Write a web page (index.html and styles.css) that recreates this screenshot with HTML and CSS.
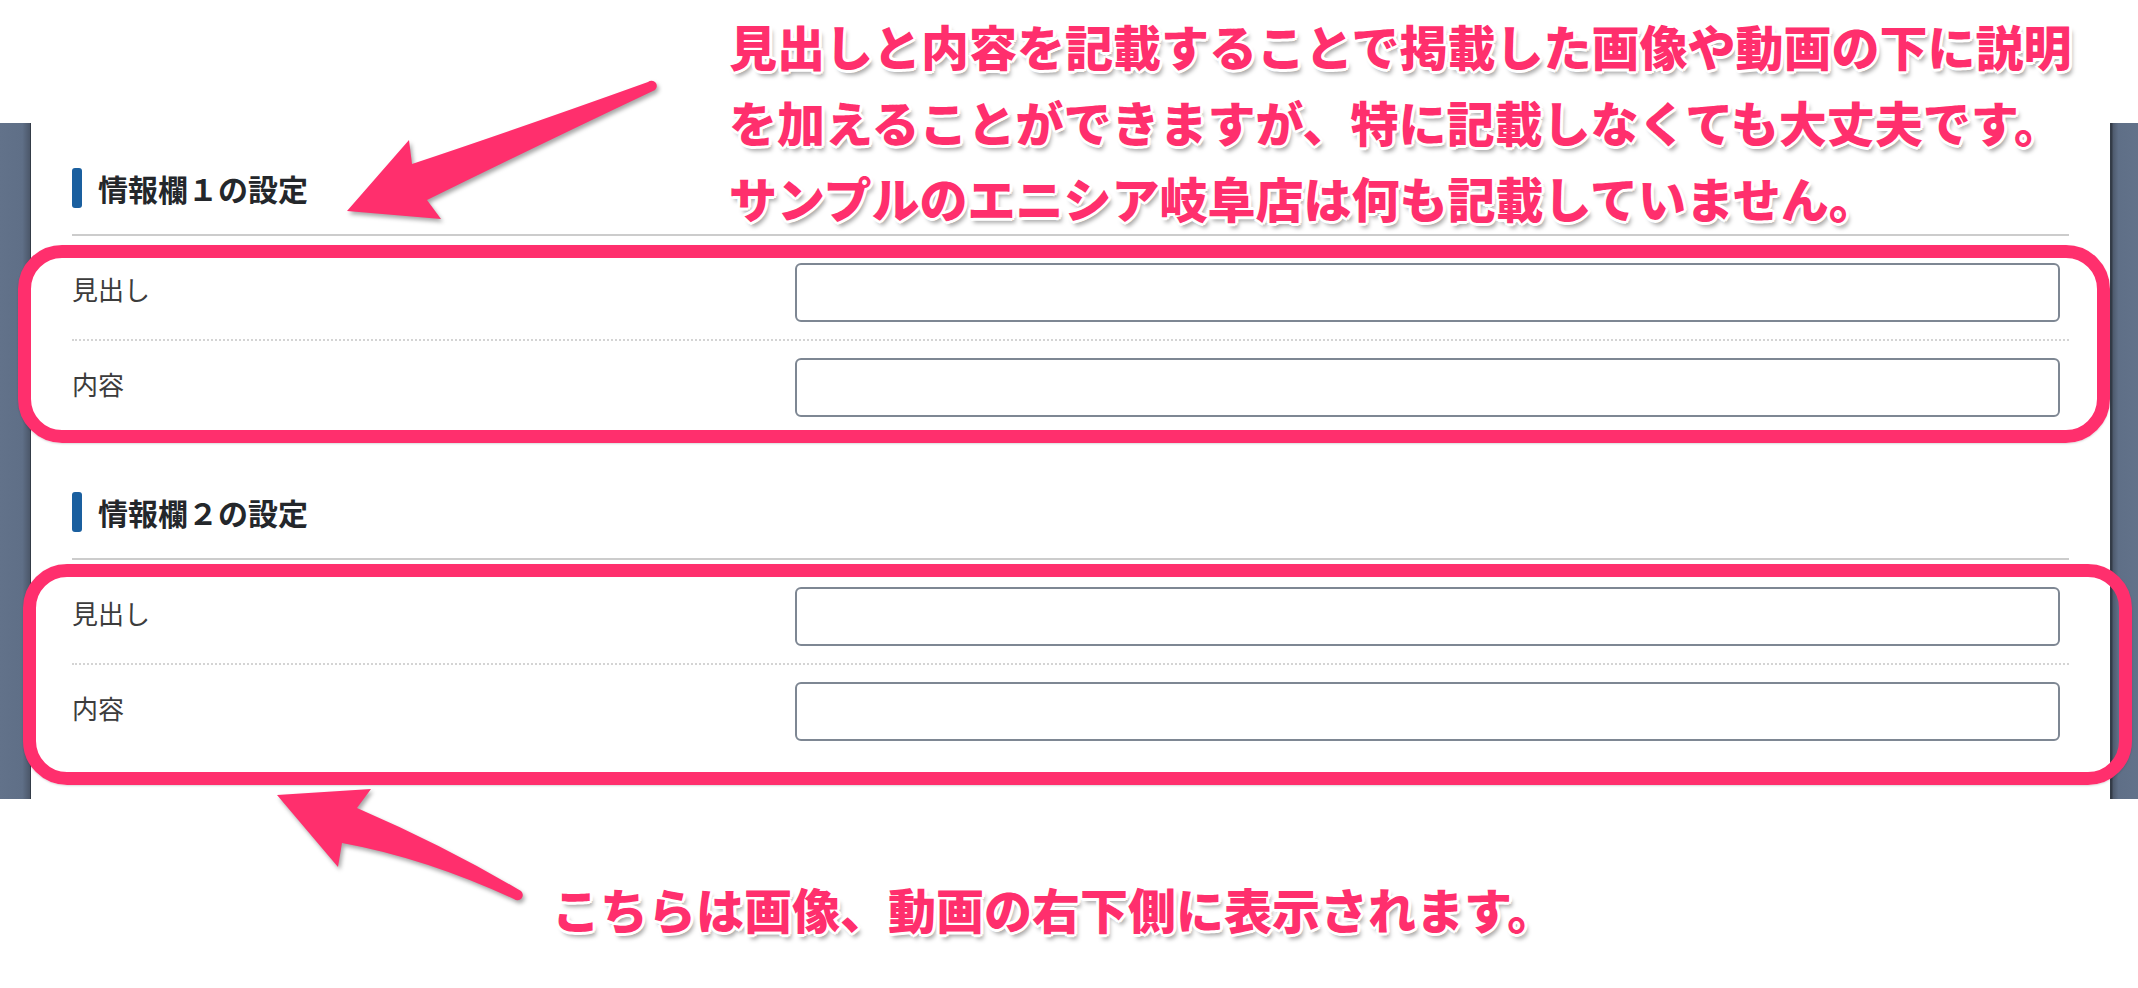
FILE: index.html
```html
<!DOCTYPE html>
<html lang="ja">
<head>
	<meta charset="UTF-8">
	<title>情報欄の設定</title>
	<link rel="stylesheet" href="styles.css">
</head>
<body>
	<div class="stage">

		<div class="frame">
			<div class="side side-left"></div>
			<div class="panel">

				<div class="section">
					<h3 class="heading"><span class="mark"></span>情報欄１の設定</h3>
					<div class="row row-first">
						<div class="label">見出し</div>
						<input type="text" class="field" name="title01">
					</div>
					<div class="row">
						<div class="label">内容</div>
						<input type="text" class="field" name="body01">
					</div>
				</div>

				<div class="section section-next">
					<h3 class="heading"><span class="mark"></span>情報欄２の設定</h3>
					<div class="row row-first">
						<div class="label">見出し</div>
						<input type="text" class="field" name="title02">
					</div>
					<div class="row">
						<div class="label">内容</div>
						<input type="text" class="field" name="body02">
					</div>
				</div>

			</div>
			<div class="side side-right"></div>
		</div>

		<!-- 赤い囲みと矢印（説明用の注釈） -->
		<div class="box box-one"></div>
		<div class="box box-two"></div>

		<svg class="arrows" width="2138" height="988" viewBox="0 0 2138 988">
			<path d="M412,164 Q520,128 648,82 A4.5,4.5 0 0 1 655,90 Q545,142 427,200 L441,219 L347,211 L409,140 Z"/>
			<path d="M277,795 L371,789 L357,808 Q445,846 521,891 A4.5,4.5 0 0 1 514,899 Q425,858 342,843 L338,867 Z"/>
		</svg>

		<p class="note note-top">見出しと内容を記載することで掲載した画像や動画の下に説明<br>を加えることができますが、特に記載しなくても大丈夫です。<br>サンプルのエニシア岐阜店は何も記載していません。</p>
		<p class="note note-bottom">こちらは画像、動画の右下側に表示されます。</p>

	</div>
</body>
</html>
```
FILE: styles.css
```css
body {
	margin: 0;
	background: #ffffff;
	font-family: "Noto Sans CJK JP", "Noto Sans", sans-serif;
}
.stage {
	position: relative;
	width: 2138px;
	height: 988px;
	overflow: hidden;
}

/* 画面の枠 */
.frame {
	display: flex;
	margin-top: 123px;
	height: 676px;
}
.side-left {
	width: 31px;
	background: linear-gradient(to right, #62728a 0, #5f6f87 72%, #4c586b 96%, #343c48 97%);
}
.side-right {
	width: 28px;
	background: linear-gradient(to right, #343c48 0, #343c48 2px, #4e5a6d 3px, #5f6f87 30%, #62728a 100%);
}
.panel {
	flex: 1;
	background: #ffffff;
	padding: 45px 41px 0 41px;
}
.section-next {
	margin-top: 58px;
}

/* 見出し */
.heading {
	display: flex;
	align-items: center;
	height: 40px;
	margin: 0 0 10px 0;
	padding-bottom: 26px;
	border-bottom: 2px solid #cccccc;
	font-size: 30px;
	font-weight: bold;
	color: #24272b;
	box-sizing: content-box;
}
.mark {
	width: 10px;
	height: 40px;
	border-radius: 3px;
	background: #1a5f9f;
	margin-right: 16px;
}

/* 入力行 */
.row {
	display: grid;
	grid-template-columns: 723px 1fr;
	align-items: center;
	padding: 17px 9px 17px 0;
}
.row-first {
	border-bottom: 2px dotted #d4d4d4;
}
.label {
	font-size: 26px;
	color: #3c3c3c;
	padding-bottom: 8px;
}
.field {
	width: 100%;
	height: 59px;
	box-sizing: border-box;
	border: 2px solid #7e8793;
	border-radius: 6px;
	background: #ffffff;
	margin: 0;
}

/* 注釈 */
.box {
	position: absolute;
	box-sizing: border-box;
	border: 13px solid #ff2f6d;
	border-radius: 44px;
	box-shadow: 0 1px 2px rgba(0, 0, 0, 0.15);
}
.box-one {
	left: 18px;
	top: 245px;
	width: 2092px;
	height: 198px;
}
.box-two {
	left: 23px;
	top: 564px;
	width: 2109px;
	height: 221px;
}
.arrows {
	position: absolute;
	left: 0;
	top: 0;
	fill: #ff2f6d;
	filter: drop-shadow(2px 3px 2px rgba(0, 0, 0, 0.35));
}
.note {
	position: absolute;
	margin: 0;
	font-family: "Noto Sans CJK JP", sans-serif;
	font-weight: 900;
	color: #ff2f6d;
	white-space: nowrap;
	text-shadow:
		3px 0 #fff, -3px 0 #fff, 0 3px #fff, 0 -3px #fff,
		2px 2px #fff, -2px -2px #fff, 2px -2px #fff, -2px 2px #fff,
		3px 5px 4px rgba(0, 0, 0, 0.35);
}
.note-top {
	left: 729px;
	top: 7px;
	font-size: 48px;
	line-height: 76px;
}
.note-bottom {
	left: 552px;
	top: 878px;
	font-size: 48px;
	line-height: 60px;
}
```
